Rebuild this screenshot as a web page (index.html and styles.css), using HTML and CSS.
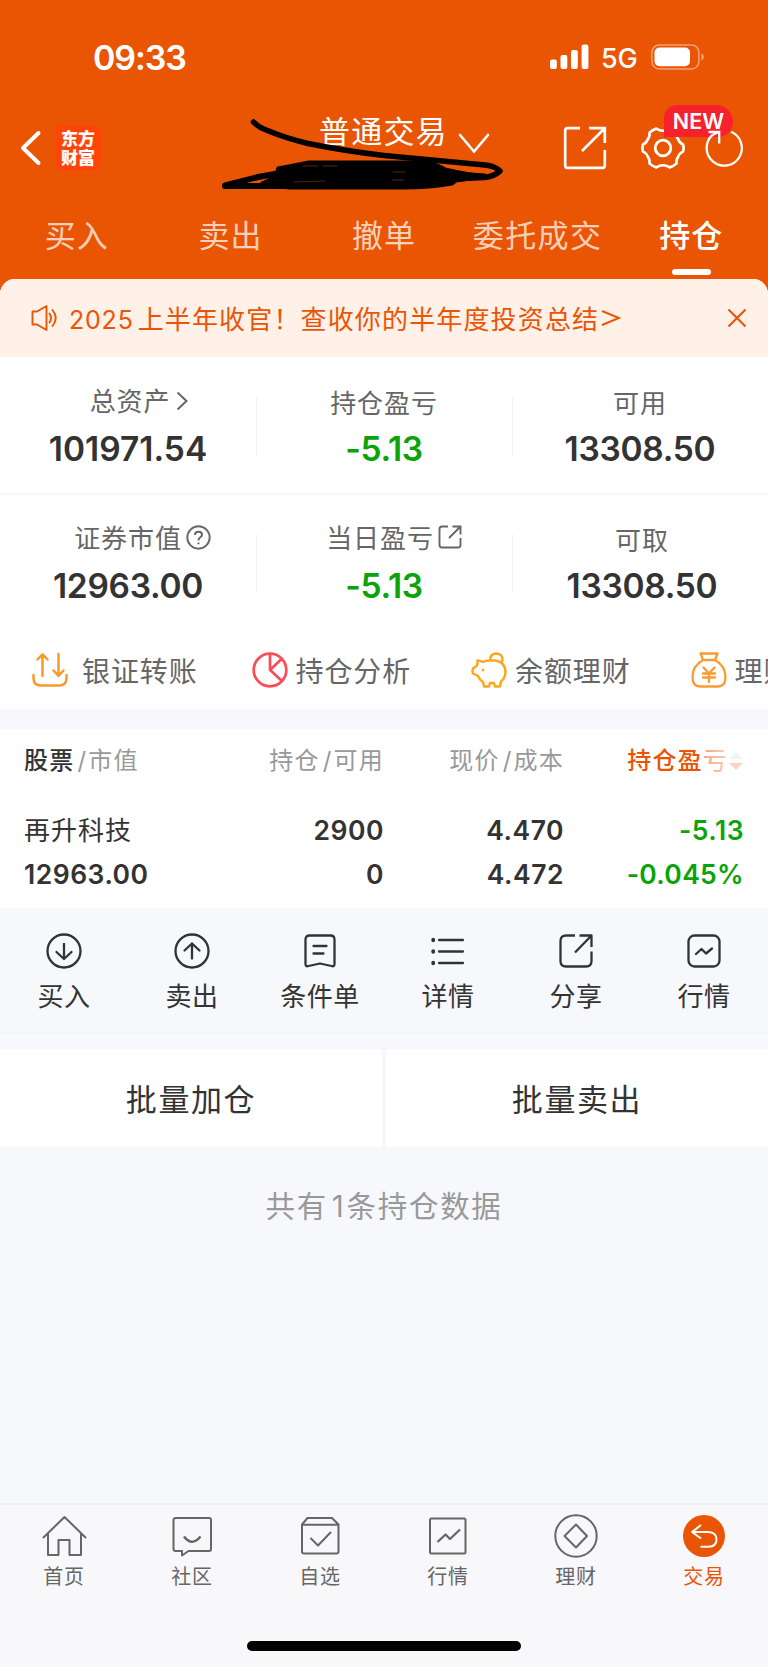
FILE: index.html
```html
<!DOCTYPE html>
<html lang="zh-CN">
<head>
<meta charset="utf-8">
<title>持仓</title>
<link rel="stylesheet" href="styles.css">
</head>
<body>
<div class="page">
  <header class="top">
    <div class="status">
      <span class="clock">09:33</span>
      <svg class="signal" width="39" height="26" viewBox="0 0 39 26" fill="#fff"><rect x="0" y="15.5" width="6.8" height="9.5" rx="2"/><rect x="10.5" y="11" width="6.8" height="14" rx="2"/><rect x="21" y="6" width="6.8" height="19" rx="2"/><rect x="31.6" y="0.5" width="6.8" height="24.5" rx="2"/></svg>
      <span class="net">5G</span>
      <svg class="battery" width="54" height="26" viewBox="0 0 54 26"><rect x=".9" y=".9" width="47" height="24" rx="7.5" fill="none" stroke="#fff" stroke-opacity=".45" stroke-width="1.5"/><rect x="3.5" y="3.6" width="35.5" height="18.6" rx="5" fill="#fff"/><path d="M50.5 9.5c3 1 3 6 0 7z" fill="#fff" fill-opacity=".5"/></svg>
    </div>
    <div class="nav">
      <svg class="back" width="24" height="38" viewBox="0 0 24 38" fill="none" stroke="#fff" stroke-width="4" stroke-linecap="round" stroke-linejoin="round"><path d="M20.5 4 5 19 20.5 34"/></svg>
      <div class="logo"><span>东方</span><span>财富</span></div>
      <div class="title">普通交易</div>
      <svg class="chev" width="32" height="22" viewBox="0 0 32 22" fill="none" stroke="#fff" stroke-width="2.6" stroke-linecap="round"><path d="M2 2 16 18.5 30 2"/></svg>
      <svg class="share" width="44" height="44" viewBox="0 0 44 44" fill="none" stroke="#fff" stroke-width="2.7"><path d="M17 2.2H4.5Q2.2 2.2 2.2 4.5V39.5Q2.2 41.8 4.5 41.8H39.5Q41.8 41.8 41.8 39.5V24M26 2.2H41.8V17M41.5 2.5 19 25"/></svg>
      <div class="gearwrap">
        <svg width="46" height="46" viewBox="-23 -23 46 46" fill="none" stroke="#fff" stroke-width="2.8" stroke-linejoin="round"><path transform="scale(.96)" d="M21 3.5Q17 5.500 15.800 9.300 13.500 12 14.100 16 11 19 7 20.200 3.500 18 0 18-3.500 18-7 20.200-11 19-14.100 16-13.500 12-15.800 9.300-17 5.500-21 3.500-22-0-21-3.500-17-5.500-15.800-9.300-13.500-12-14.100-16-11-19-7-20.200-3.500-18 0-18 3.500-18 7-20.200 11-19 14.100-16 13.500-12 15.800-9.300 17-5.500 21-3.500 22 0 21 3.500Z"/><circle r="7.800"/></svg>
        <span class="new">NEW</span>
      </div>
      <svg class="refresh" width="42" height="46" viewBox="0 0 42 46" fill="none" stroke="#fff" stroke-width="2.3"><path d="M28 6.800A17.600 17.600 0 1 1 9.800 9.700"/><path d="M5.500 7H16.200V18.500"/><path d="M9.800 9.700 16 7"/></svg>
      <svg class="scribble" width="290" height="80" viewBox="218 115 290 80" fill="none" stroke="#000" stroke-linecap="round" stroke-linejoin="round"><path d="M253.500 122Q258 127 265 129.500 285 138 308 143.500 345 151 384 155.500L485 165Q495 166 500 171 495 176 485 177.500L450 179" stroke-width="5.500"/><path d="M225 185.500 258 177 292 171 M225 186H300" stroke-width="6"/><path d="M278 168 309 162H425Q440 165 445 169 470 175 485 175L470 179 456 181 452 184Q430 188 404 188H290Q275 187 262 183Q276 178 278 168Z" fill="#000" stroke-width="3"/><path d="M303 166H318M323 166H337M294 182 325 181M393 172H405M392 180H404" stroke="#5b2208" stroke-width="1"/></svg>
    </div>
    <nav class="tabs"><span>买入</span><span>卖出</span><span>撤单</span><span class="long">委托成交</span><span class="on">持仓</span></nav>
  </header>

  <div class="sheet">
    <div class="notice">
      <svg width="28" height="28" viewBox="0 0 28 28" fill="none" stroke="#ea5504" stroke-width="1.900" stroke-linejoin="round" stroke-linecap="round"><path d="M2.500 7.500H7L16.500 2V26L7 20.500H2.500ZM19.500 9.500Q22.500 14 19.500 18.500M22.500 6Q29 14 22.500 22"/></svg>
      <span class="msg"><b>2025</b>上半年收官！查收你的半年度投资总结</span>
      <svg class="gt" width="20" height="18" viewBox="0 0 20 18" fill="none" stroke="#ea5504" stroke-width="1.900"><path d="M1 2 18 9 1 16"/></svg>
      <svg class="close" width="20" height="20" viewBox="0 0 20 20" fill="none" stroke="#ea5504" stroke-width="2.100"><path d="M1.500 1.500 18.500 18.500M18.500 1.500 1.500 18.500"/></svg>
    </div>
    <section class="sum">
      <div class="cell"><div class="lab up s1">总资产<svg width="12" height="20" viewBox="0 0 12 20" fill="none" stroke="#666" stroke-width="2"><path d="M1.500 1.500 10.500 10 1.500 18.500"/></svg></div><div class="val total">101971.54</div></div>
      <div class="cell"><div class="lab">持仓盈亏</div><div class="val green">-5.13</div></div>
      <div class="cell"><div class="lab">可用</div><div class="val">13308.50</div></div>
    </section>
    <section class="sum second">
      <div class="cell"><div class="lab up s2">证券市值<svg class="q" width="25" height="25" viewBox="0 0 25 25" fill="none" stroke="#666" stroke-width="1.900"><circle cx="12.500" cy="12.500" r="11.200"/><path d="M9 10Q9 6.800 12.500 6.800T16 9.800Q16 11.300 14 12.500 12.500 13.400 12.500 15.500M12.500 17.500V19.200" stroke-width="2"/></svg></div><div class="val">12963.00</div></div>
      <div class="cell"><div class="lab up s3">当日盈亏<svg class="q" width="24" height="24" viewBox="0 0 24 24" fill="none" stroke="#666" stroke-width="1.900"><path d="M10 1.500H4Q1.500 1.500 1.500 4V20Q1.500 22.500 4 22.500H20Q22.500 22.500 22.500 20V13M14.500 1.500H22.500V9.500M22 2 11 13"/></svg></div><div class="val green">-5.13</div></div>
      <div class="cell take"><div class="lab">可取</div><div class="val">13308.50</div></div>
    </section>
    <section class="links">
      <div class="link"><svg width="36" height="36" viewBox="0 0 36 36" fill="none" stroke="#f59a2b" stroke-width="2.500" stroke-linecap="round" stroke-linejoin="round"><path d="M1.500 23V26Q1.500 33.500 9 33.500H27Q34.500 33.500 34.500 26V23M10.500 24V2.500M5.500 7.500 10.500 2.300 15.500 7.500M26.500 2V23.500M21.500 18.500 26.500 23.800 31.500 18.500"/></svg><span class="wide">银证转账</span></div>
      <div class="link"><svg width="36" height="36" viewBox="0 0 36 36" fill="none" stroke="#fa4d55" stroke-width="2.700"><circle cx="18" cy="18" r="16.300"/><path d="M18 1.500V18L30.500 29.500M18 18 30 6.500"/></svg><span>持仓分析</span></div>
      <div class="link"><svg width="36" height="36" viewBox="0 0 36 36" fill="none" stroke="#fba81c" stroke-width="2.500" stroke-linejoin="round"><path d="M18 8.500H24C30.500 9 34.500 14 34.500 20 34.500 24 33 27 30 29.500L29 34.500H24L23 31H19L18 34.500H13L12 30Q8.500 28 7 24L2 21.500Q1 18.500 2 16.500L5.500 14Q7 12 6.500 8.500 8 8 12 10Q15 8.500 18 8.500ZM19 8.500Q19 2 25 1.500 32 2 31.500 8 31 10 29.500 11.500"/><circle cx="12" cy="18" r="1" fill="#fba81c" stroke-width="1"/></svg><span>余额理财</span></div>
      <div class="link"><svg width="36" height="36" viewBox="0 0 36 36" fill="none" stroke="#f99b31" stroke-width="2.300" stroke-linejoin="round" stroke-linecap="round"><path d="M9.500 1.500H26.500L24 8H12ZM12 8C5 12 1.500 17 1.500 25 1.500 31 4 34.500 9 34.500H27C32 34.500 34.500 31 34.500 25 34.500 17 31 12 24 8M12.500 15.500 18 21.500 23.500 15.500M18 21.500V30M12 21.500H24M12 25.500H24" /></svg><span>理财</span></div>
    </section>
  </div>

  <section class="hold">
    <div class="row head">
      <span><b>股票</b><i>/</i>市值</span><span>持仓<i>/</i>可用</span><span>现价<i>/</i>成本</span>
      <span class="sort"><em>持仓盈</em><u>亏</u><svg width="16" height="22" viewBox="0 0 16 22"><path d="M1 9 8 2 15 9Z" fill="#f2f2f4"/><path d="M1 13H15L8 20Z" fill="#fbd3c1"/></svg></span>
    </div>
    <div class="row stock"><span class="name">再升科技</span><span>2900</span><span>4.470</span><span class="green">-5.13</span></div>
    <div class="row stock low"><span>12963.00</span><span>0</span><span>4.472</span><span class="green pct">-0.045%</span></div>
  </section>

  <section class="acts">
    <div class="act"><svg viewBox="0 0 36 36"><circle cx="18" cy="18" r="16.500"/><path d="M18 11V26M10.500 19 18 26 25.500 19"/></svg>买入</div>
    <div class="act"><svg viewBox="0 0 36 36"><circle cx="18" cy="18" r="16.500"/><path d="M18 25.500V10.500M10.500 17.500 18 10.500 25.500 17.500"/></svg>卖出</div>
    <div class="act"><svg viewBox="0 0 36 36"><path d="M7.500 2.500H28.500Q32.500 2.500 32.500 6.500V31Q32.500 34 29.500 33L18 30.500 6.500 33Q3.500 34 3.500 31V6.500Q3.500 2.500 7.500 2.500ZM11.500 13H24.500M11.500 20.500H21.500"/></svg>条件单</div>
    <div class="act"><svg viewBox="0 0 36 36"><path d="M9 7H33M9 18.500H33M9 30H33"/><path d="M3.200 6.700V7.300M3.200 18.200V18.800M3.200 29.700V30.300" stroke-width="3.800"/></svg>详情</div>
    <div class="act"><svg viewBox="0 0 36 36"><path stroke-linecap="butt" d="M17 2.500H8Q2.500 2.500 2.500 8V28Q2.500 33.500 8 33.500H28Q33.500 33.500 33.500 28V18.500M21.500 2.500H33.500V14M33 3 17 19.500"/></svg>分享</div>
    <div class="act"><svg viewBox="0 0 36 36"><rect x="2.500" y="2.500" width="31" height="31" rx="6"/><path d="M10 21 15.500 16 20 20.500 26 15.500"/></svg>行情</div>
  </section>

  <section class="batch"><div>批量加仓</div><div>批量卖出</div></section>
  <p class="count">共有<b>1</b>条持仓数据</p>

  <footer class="bar">
    <div class="item"><svg viewBox="0 0 44 44"><path d="M1 24 22.500 3 44 24M6 20V41H16.500V26H27.500V41H39V20"/></svg>首页</div>
    <div class="item"><svg viewBox="0 0 44 44"><path d="M6 4H39Q41 4 41 6V35Q41 37 39 37H18.500L12 41.500V37H5.500Q3.500 37 3.500 35V6Q3.500 4 6 4Z"/><path d="M14 22.500Q22 33 30.500 22.500" stroke-width="2.500"/></svg>社区</div>
    <div class="item"><svg viewBox="0 0 44 44"><path d="M9.500 4H34L40.500 10.500V37.500Q40.500 39.500 38.500 39.500H6Q4 39.500 4 37.500V10.500ZM4 10.800H40.500M12.500 24 20 31.500 33 18"/></svg>自选</div>
    <div class="item"><svg viewBox="0 0 44 44"><rect x="4" y="4.500" width="35.500" height="35" rx="1.500"/><path d="M11.500 28 19.500 20.500 24 25 34 15.500" stroke-width="2.300"/></svg>行情</div>
    <div class="item"><svg viewBox="0 0 44 44"><circle cx="22" cy="22" r="20.700"/><path d="M22 10.500 33 22 22 33.500 10.500 22Z"/></svg>理财</div>
    <div class="item active"><svg viewBox="0 0 44 44"><circle cx="22" cy="22" r="21" fill="#ea5504" stroke="none"/><path stroke="#fff" d="M19 11 10 18 19 24.500M10 18H26.500Q34.500 18.500 34.500 25.500 34.500 32.500 26.500 32.800H18.500"/></svg>交易</div>
    <div class="home"></div>
  </footer>
</div>
</body>
</html>
```
FILE: styles.css
```css
* { box-sizing: border-box; }
body { margin: 0; font-family: Inter, "Noto Sans CJK SC", sans-serif; color: #333; background: #f7f8fb; }
b, i, em, u { font-weight: inherit; font-style: normal; text-decoration: none; }
svg { display: block; flex: none; overflow: visible; }
.page { width: 768px; height: 1667px; display: flex; flex-direction: column; background: #f7f8fb; overflow: hidden; }
.top { height: 293px; flex: none; background: #ea5504; color: #fff; }

.status { height: 102px; padding: 38px 0 0 93px; display: flex; align-items: flex-start; line-height: 38px; }
.clock { font-size: 34px; font-weight: 600; width: 457px; letter-spacing: -1.1px; line-height: 39px; }
.signal { margin-top: 6px; }
.net { font-size: 27px; font-weight: 500; margin-left: 12px; width: 50px; line-height: 41px; letter-spacing: -.3px; }
.battery { margin-top: 6px; }

.nav { position: relative; height: 92px; display: flex; align-items: center; padding-left: 18px; }
.logo { margin-left: 13px; width: 46px; height: 46px; border-radius: 8px; background: #ff4407; font: 900 17px/19px "Noto Sans CJK SC", sans-serif; text-align: center; padding-top: 3px; }
.logo span { display: block; }
.title { margin: -33px 0 0 218px; font-size: 31px; letter-spacing: 1.2px; width: 139px; line-height: 40px; white-space: nowrap; }
.chev { margin-top: -9px; }
.share { margin-left: 73px; }
.gearwrap { position: relative; margin-left: 33px; }
.new { position: absolute; left: 24px; top: -20px; width: 69px; height: 32px; line-height: 32px; border-radius: 13px 17px 15px 0; background: #f5222d; text-align: center; font-size: 21.5px; font-weight: 600; letter-spacing: 0; }
.refresh { position: relative; margin-left: 17px; }
.scribble { position: absolute; left: 218px; top: 13px; }

.tabs { display: grid; grid-template-columns: repeat(5, 1fr); text-align: center; font-size: 31px; letter-spacing: 1px; line-height: 40px; padding-top: 22px; color: rgba(255,255,255,.74); }
.tabs .on { color: #fff; font-weight: 500; }
.tabs .long { letter-spacing: 1.4px; }
.on::after { content: ""; display: block; width: 39px; height: 6px; margin: 13px auto 0; border-radius: 3px; background: #fff; }

.sheet { margin-top: -14px; flex: none; height: 430px; border-radius: 15px 15px 0 0; background: #fff; overflow: hidden; }
.notice { height: 78px; background: #fff0e8; color: #ea5504; display: flex; align-items: center; padding: 0 21px 0 30px; }
.msg { margin: -2px 0 0 11px; font-size: 26px; letter-spacing: 1.15px; white-space: nowrap; }
.msg b { font-size: 25px; letter-spacing: .8px; margin-right: 4px; }
.gt { margin-left: 2px; }
.close { margin-left: auto; }

.sum { height: 138px; display: grid; grid-template-columns: repeat(3, 1fr); text-align: center; border-bottom: 2px solid #f6f6f7; }
.second { height: 126px; border: 0; margin-top: -1px; }
.cell { position: relative; padding-top: 28px; }
.cell + .cell::before { content: ""; position: absolute; left: 0; top: 40px; width: 1px; height: 59px; background: #f4f4f6; }
.lab { display: flex; justify-content: center; align-items: center; height: 32px; font-size: 26px; letter-spacing: .9px; color: #666; }
.up { margin-top: -2px; }
.s1 { padding-left: 22px; }
.s2 { padding-left: 29px; }
.s3 { padding-left: 20px; }
.lab svg { margin: 3px 0 0 6px; }
.lab .q { margin: 2px 0 0 4px; }
.take { padding-left: 4px; }
.val { height: 40px; line-height: 40px; margin-top: 12px; font-size: 33.5px; font-weight: 600; letter-spacing: -.3px; }
.up + .val { margin-top: 14px; }
.total { letter-spacing: 0; }
.green { color: #0aa30a; }

.links { display: flex; height: 70px; align-items: center; padding: 0 0 0 32px; white-space: nowrap; color: #666; margin-top: 15px; }
.link { display: flex; align-items: center; flex: none; width: 219.5px; font-size: 28px; letter-spacing: .9px; }
.link span { margin: -1px 0 0 8px; }
.link .wide { margin-left: 14px; }

.hold { flex: none; margin-top: 20px; height: 179px; background: #fff; padding: 14px 24px 0; }
.row { display: grid; grid-template-columns: 180px 180px 180px 180px; text-align: right; line-height: 36px; height: 36px; }
.row > :first-child { text-align: left; }
.head { font-size: 24px; letter-spacing: 1.2px; color: #999; }
.head b { color: #333; font-weight: 500; }
.head i { margin: 0 1px 0 3px; }
.sort { display: flex; justify-content: flex-end; align-items: center; color: #ea5504; font-weight: 500; }
.sort u { background: linear-gradient(90deg, #f6a57d, #fbd0bb); -webkit-background-clip: text; color: transparent; }
.stock { margin-top: 33px; font-size: 26.5px; font-weight: 600; letter-spacing: .5px; }
.stock .name { font-size: 26px; font-weight: 400; letter-spacing: 1px; padding-top: 1px; }
.stock .pct { letter-spacing: .3px; }
.low { margin-top: 8px; }

.acts { flex: none; height: 125px; border-bottom: 1px solid #f2f3f6; padding-top: 25px; display: grid; grid-template-columns: repeat(6, 1fr); }
.act { display: flex; flex-direction: column; align-items: center; font-size: 26px; letter-spacing: .5px; line-height: 34px; }
.act svg { width: 36px; height: 36px; margin-bottom: 11px; fill: none; stroke: #333; stroke-width: 2.3; stroke-linecap: round; stroke-linejoin: round; }

.batch { flex: none; margin-top: 16px; height: 98px; display: grid; grid-template-columns: 1fr 1fr; gap: 4px; text-align: center; font-size: 31px; letter-spacing: 1.6px; line-height: 101px; }
.batch div { background: #fff; height: 98px; }
.count { margin: 39px 0 0; text-align: center; font-size: 29.5px; letter-spacing: 1.7px; line-height: 40px; color: #999; }
.count b { margin: 0 1px 0 4px; }

.bar { margin-top: auto; flex: none; height: 164px; border-top: 2px solid #ebedf2; padding-top: 9px; display: grid; grid-template-columns: repeat(6, 1fr); align-content: start; background: #f8f8fb; }
.item { display: flex; flex-direction: column; align-items: center; font-size: 20px; letter-spacing: .8px; line-height: 28px; color: #666; }
.item svg { width: 44px; height: 44px; margin-bottom: 5px; fill: none; stroke: #666; stroke-width: 2; stroke-linejoin: round; }
.active { color: #ea5504; }
.home { grid-column: 1 / -1; justify-self: center; width: 274px; height: 10px; border-radius: 5px; background: #000; margin-top: 50px; }
```
